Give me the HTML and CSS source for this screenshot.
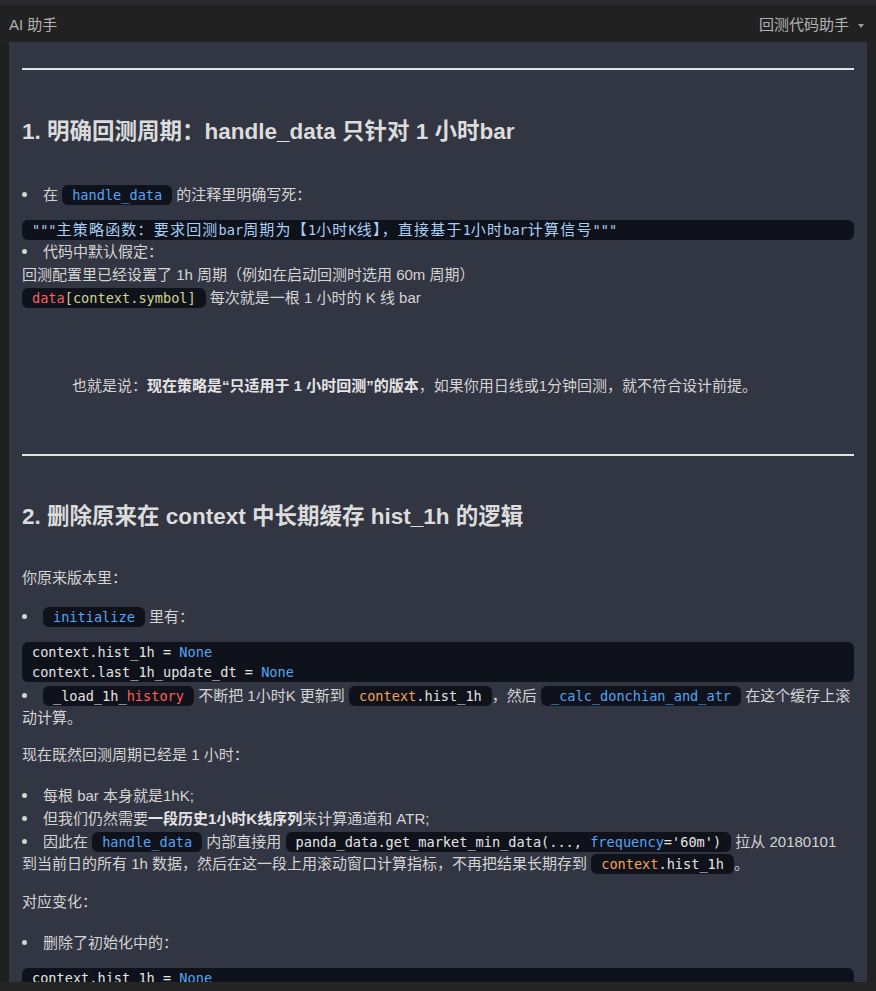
FILE: index.html
```html
<!DOCTYPE html>
<html lang="zh-CN">
<head>
<meta charset="utf-8">
<title>AI 助手</title>
<link rel="stylesheet" href="styles.css">
</head>
<body>
<div class="topstrip"></div>
<header class="header">
  <div class="title">AI 助手</div>
  <div class="picker">回测代码助手 <span class="caret"></span></div>
</header>
<div class="main">
  <div class="gutter"></div>
  <article class="panel">
    <hr class="rule first">
    <h3 class="h3 h-one">1. 明确回测周期：handle_data 只针对 1 小时bar</h3>
    <div class="li li-a">在 <code class="ic blue">handle_data</code> 的注释里明确写死：</div>
    <pre class="pre pre-a"><span class="doc">"""<span class="cjk">主策略函数：要求回测</span>bar<span class="cjk">周期为【</span>1<span class="cjk">小时</span>K<span class="cjk">线】，直接基于</span>1<span class="cjk">小时</span>bar<span class="cjk">计算信号</span>"""</span></pre>
    <div class="li li-tight">代码中默认假定：</div>
    <p class="p p-tight">回测配置里已经设置了 1h 周期（例如在启动回测时选用 60m 周期）</p>
    <p class="p p-tight"><code class="ic"><span class="red">data</span><span class="yel">[context.symbol]</span></code> 每次就是一根 1 小时的 K 线 bar</p>
    <p class="quote">也就是说：<b>现在策略是“只适用于 1 小时回测”的版本</b>，如果你用日线或1分钟回测，就不符合设计前提。</p>
    <hr class="rule second">
    <h3 class="h3 h-two">2. 删除原来在 context 中长期缓存 hist_1h 的逻辑</h3>
    <p class="p p-intro">你原来版本里：</p>
    <div class="li li-b"><code class="ic blue">initialize</code> 里有：</div>
    <pre class="pre pre-b">context.hist_1h = <span class="blue">None</span>
context.last_1h_update_dt = <span class="blue">None</span></pre>
    <div class="li li-c"><code class="ic">_load_1h_<span class="red">history</span></code> 不断把 1小时K 更新到 <code class="ic"><span class="orange">context</span>.hist_1h</code>，然后 <code class="ic blue">_calc_donchian_and_atr</code> 在这个缓存上滚动计算。</div>
    <p class="p p-now">现在既然回测周期已经是 1 小时：</p>
    <div class="li li-d">每根 bar 本身就是1hK;</div>
    <div class="li li-tight">但我们仍然需要<b>一段历史1小时K线序列</b>来计算通道和 ATR;</div>
    <div class="li li-tight">因此在 <code class="ic blue">handle_data</code> 内部直接用 <code class="ic">panda_data.get_market_min_data(..., <span class="blue">frequency</span>='60m')</code> 拉从 20180101 到当前日的所有 1h 数据，然后在这一段上用滚动窗口计算指标，不再把结果长期存到 <code class="ic"><span class="orange">context</span>.hist_1h</code>。</div>
    <p class="p p-change">对应变化：</p>
    <div class="li li-e">删除了初始化中的：</div>
    <pre class="pre pre-c">context.hist_1h = <span class="blue">None</span>
context.last_1h_update_dt = <span class="blue">None</span></pre>
  </article>
  <div class="scrolltrack"></div>
</div>
<div class="bottomstrip"></div>
</body>
</html>
```
FILE: styles.css
```css
* { box-sizing: border-box; }
html, body { margin: 0; padding: 0; }
body {
  width: 876px;
  height: 991px;
  overflow: hidden;
  background: #1f1f1f;
  font-family: "Liberation Sans", Arial, "Noto Sans CJK SC", sans-serif;
  color: #d4d4d4;
}
.topstrip { height: 5px; background: #2a2a2e; }
.header {
  height: 37px;
  background: #212121;
  display: flex;
  align-items: center;
  justify-content: space-between;
  padding: 0 12px 0 9px;
  font-size: 15px;
  color: #b2b2b2;
}
.picker { display: flex; align-items: center; gap: 9px; }
.caret {
  width: 0; height: 0;
  border-left: 3px solid transparent;
  border-right: 3px solid transparent;
  border-top: 4px solid #9a9a9a;
  margin-top: 4px;
}
.main { display: flex; height: 940px; }
.gutter { width: 9px; background: #1f1f1f; }
.scrolltrack { width: 9px; background: #222222; }
.bottomstrip { height: 9px; background: #252525; }
.panel {
  flex: 1;
  background: #323542;
  overflow: hidden;
  padding: 0 13px;
  font-size: 15px;
  line-height: 22px;
}
.rule {
  border: 0;
  height: 2px;
  background: #e2e2e2;
  margin: 0;
}
.rule.first { margin-top: 26px; }
.rule.second { margin-top: 57px; }
.h3 {
  margin: 0;
  font-size: 22.5px;
  line-height: 30px;
  font-weight: bold;
  color: #dcdcdc;
}
.h-one { margin-top: 47px; }
.h-two { margin-top: 46px; }
.p { margin: 0; }
.li { margin: 0; }
.li::before {
  content: "";
  display: inline-block;
  width: 5px;
  height: 5px;
  border-radius: 50%;
  background: #d4d4d4;
  margin: 0 16px 0 0;
  vertical-align: 3px;
}
.li-a { margin-top: 37px; }
.li-tight, .p-tight { margin-top: 1px; }
.li-b { margin-top: 17px; }
.li-c { margin-top: 3px; }
.li-d { margin-top: 19px; }
.li-e { margin-top: 19px; }
.p-intro { margin-top: 35px; }
.p-now { margin-top: 15px; }
.p-change { margin-top: 16px; }
.quote {
  margin: 66px 0 0 0;
  padding-left: 50px;
}
b { font-weight: bold; color: #e4e4e4; }
.pre {
  margin: 0;
  background: #0f121b;
  border-radius: 6px;
  padding: 0 10px;
  font-family: "DejaVu Sans Mono", "Noto Sans CJK SC", monospace;
  font-size: 13.6px;
  line-height: 20px;
  color: #e4e4e4;
  white-space: pre;
}
.pre-a { margin-top: 14px; }
.pre-b { margin-top: 14px; }
.pre-c { margin-top: 14px; }
.cjk { font-size: 15px; letter-spacing: 1.2px; }
.doc { color: #a9cff5; }
.ic {
  font-family: "DejaVu Sans Mono", "Noto Sans CJK SC", monospace;
  font-size: 13.6px;
  background: #0f121b;
  border-radius: 6px;
  padding: 2px 10px;
  color: #e4e4e4;
}
.blue { color: #55a6f4; }
.red { color: #ff5c5c; }
.yel { color: #d3d68e; }
.orange { color: #f5a257; }
```
